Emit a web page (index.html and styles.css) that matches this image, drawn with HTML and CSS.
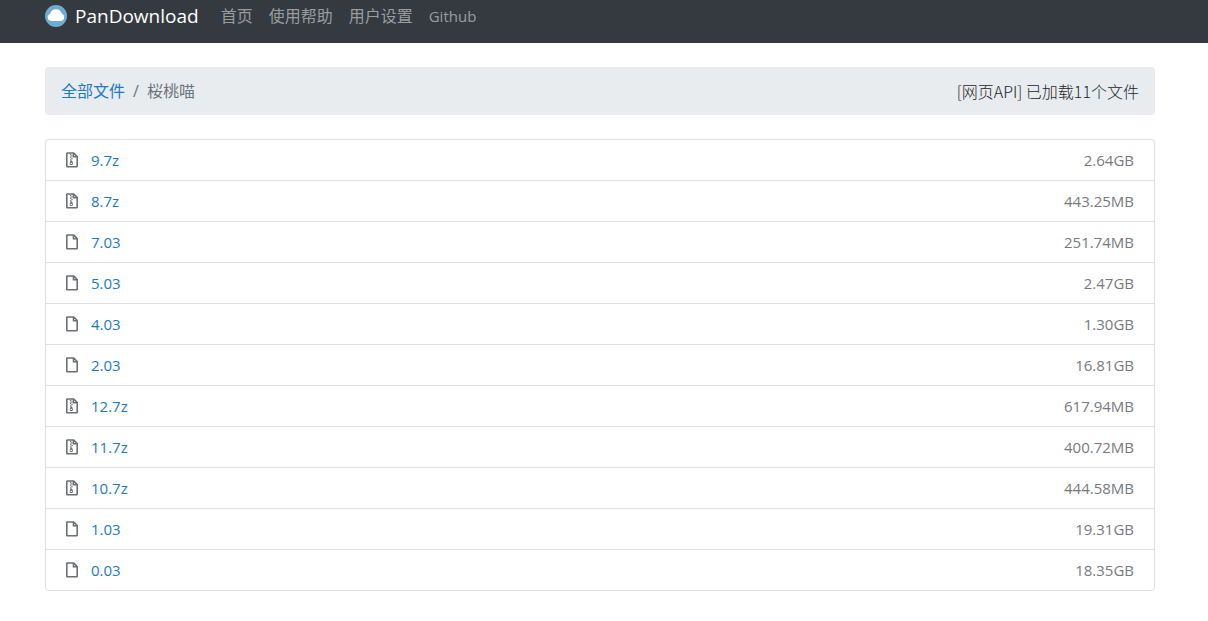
FILE: index.html
```html
<!DOCTYPE html>
<html lang="zh-CN">
<head>
<meta charset="utf-8">
<meta name="viewport" content="width=device-width, initial-scale=1">
<title>PanDownload</title>
<link rel="stylesheet" href="styles.css">
</head>
<body>
<svg class="sprite" aria-hidden="true">
  <symbol id="file" viewBox="0 0 12 16">
    <path d="M1.5 1h6.2L11.2 4.5V14.2q0 .6-.6.6H1.4q-.6 0-.6-.6V1.6q0-.6.7-.6ZM7.5 1v3.8h3.7" fill="none" stroke="currentColor" stroke-width="1.6"/>
  </symbol>
  <symbol id="zip" viewBox="0 0 12 16">
    <path d="M1.5 1h6.2L11.2 4.5V14.2q0 .6-.6.6H1.4q-.6 0-.6-.6V1.6q0-.6.7-.6ZM7.5 1v3.8h3.7" fill="none" stroke="currentColor" stroke-width="1.6"/>
    <path d="M4 2h1.3v1.3H4zM5.3 3.3h1.3v1.3H5.3zM4 4.6h1.3v1.3H4zM5.3 5.9h1.3v1.3H5.3zM4 7.2h1.3v1.3H4z" fill="currentColor"/>
    <path d="M4.6 8.5h1.5l.9 2.9q.2 1.7-1.7 1.7t-1.7-1.7ZM5.3 10.7q-.9 0-.9.7t.9.7.9-.7-.9-.7Z" fill="currentColor" fill-rule="evenodd"/>
  </symbol>
</svg>
<header class="navbar">
  <nav class="container nav">
    <a class="brand" href="#">
      <svg class="logo" viewBox="0 0 22 22" aria-hidden="true"><circle cx="11" cy="11" r="11" fill="#70acd0"/><path d="M6 16a3.6 3.6 0 0 1-.9-7 6 6 0 0 1 11.6-.4 3.9 3.9 0 0 1-.4 7.4Z" fill="#fff"/></svg>
      <span>PanDownload</span>
    </a>
    <a class="nav-link" href="#">首页</a>
    <a class="nav-link" href="#">使用帮助</a>
    <a class="nav-link" href="#">用户设置</a>
    <a class="nav-link latin" href="#">Github</a>
  </nav>
</header>
<main class="container">
  <div class="breadcrumb">
    <a class="link" href="#">全部文件</a>
    <span class="muted">/</span>
    <span class="muted">桜桃喵</span>
    <span class="status">[网页API] 已加载11个文件</span>
  </div>
  <ul class="files">
    <li class="row"><svg class="icon" aria-hidden="true"><use href="#zip"/></svg><a class="link" href="#">9.7z</a><span class="size">2.64GB</span></li>
    <li class="row"><svg class="icon" aria-hidden="true"><use href="#zip"/></svg><a class="link" href="#">8.7z</a><span class="size">443.25MB</span></li>
    <li class="row"><svg class="icon" aria-hidden="true"><use href="#file"/></svg><a class="link" href="#">7.03</a><span class="size">251.74MB</span></li>
    <li class="row"><svg class="icon" aria-hidden="true"><use href="#file"/></svg><a class="link" href="#">5.03</a><span class="size">2.47GB</span></li>
    <li class="row"><svg class="icon" aria-hidden="true"><use href="#file"/></svg><a class="link" href="#">4.03</a><span class="size">1.30GB</span></li>
    <li class="row"><svg class="icon" aria-hidden="true"><use href="#file"/></svg><a class="link" href="#">2.03</a><span class="size">16.81GB</span></li>
    <li class="row"><svg class="icon" aria-hidden="true"><use href="#zip"/></svg><a class="link" href="#">12.7z</a><span class="size">617.94MB</span></li>
    <li class="row"><svg class="icon" aria-hidden="true"><use href="#zip"/></svg><a class="link" href="#">11.7z</a><span class="size">400.72MB</span></li>
    <li class="row"><svg class="icon" aria-hidden="true"><use href="#zip"/></svg><a class="link" href="#">10.7z</a><span class="size">444.58MB</span></li>
    <li class="row"><svg class="icon" aria-hidden="true"><use href="#file"/></svg><a class="link" href="#">1.03</a><span class="size">19.31GB</span></li>
    <li class="row"><svg class="icon" aria-hidden="true"><use href="#file"/></svg><a class="link" href="#">0.03</a><span class="size">18.35GB</span></li>
  </ul>
</main>
</body>
</html>
```
FILE: styles.css
```css
* { box-sizing: border-box; }
body {
  margin: 0;
  background: #fff;
  color: #212529;
  font: 16px/24px "Open Sans", "Noto Sans CJK SC", sans-serif;
}
a { text-decoration: none; }
.sprite { display: none; }
.container { max-width: 1200px; padding: 0 45px; }
.navbar { background: #343a40; padding-bottom: 11px; }
.nav { display: flex; align-items: center; gap: 16px; height: 32px; }
.brand {
  display: flex;
  align-items: center;
  gap: 8px;
  margin-right: 6px;
  color: #fff;
  font-size: 19px;
}
.logo { width: 22px; height: 22px; }
.nav-link { color: #9a9da0; }
.latin { font-size: 15px; }
.breadcrumb {
  display: flex;
  align-items: center;
  gap: 8px;
  margin: 24px 0;
  padding: 12px 16px;
  background: #e9ecef;
  border-radius: 4px;
}
.link { color: #1c7ac4; }
.muted { color: #6c757d; }
.status { margin-left: auto; font-weight: 300; font-family: "Noto Sans CJK SC", sans-serif; }
.files {
  margin: 0;
  padding: 0;
  list-style: none;
  border: 1px solid #dfdfdf;
  border-radius: 4px;
  font-size: 15px;
}
.row {
  display: flex;
  align-items: center;
  padding: 8px 20px;
}
.row + .row { border-top: 1px solid #dfdfdf; }
.icon { width: 12px; height: 16px; margin-right: 13px; color: #6c6f73; }
.size { margin-left: auto; color: #777a7d; }
```
